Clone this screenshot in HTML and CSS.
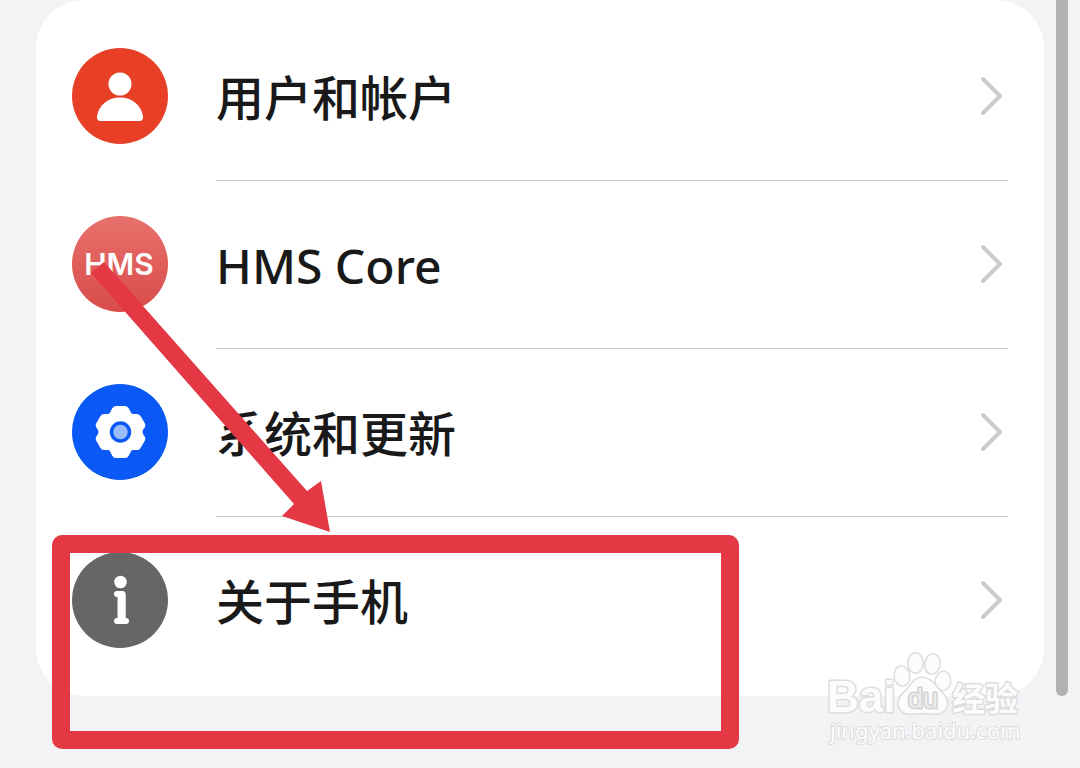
FILE: index.html
```
<!DOCTYPE html>
<html lang="zh-CN">
<head>
    <meta charset="UTF-8">
    <meta name="viewport" content="width=device-width, initial-scale=1.0">
    <title>设置</title>
    <link rel="stylesheet" href="styles.css">
</head>
<body>
    <main class="page">
        <nav class="settings-list">
            <a class="item" href="#account">
                <svg class="item-icon" viewBox="0 0 96 96" aria-hidden="true">
                    <circle cx="48" cy="48" r="48" fill="#e84026"/>
                    <circle cx="48" cy="36" r="11.500" fill="#fff"/>
                    <path d="M48 49.500C60 49.500 69 57 71 68C71.500 71 70 73 67 73H29C26 73 24.500 71 25 68C27 57 36 49.500 48 49.500Z" fill="#fff"/>
                </svg>
                <span class="item-body">
                    <span class="item-title">用户和帐户</span>
                    <svg class="chevron" viewBox="0 0 24 42" aria-hidden="true"><path d="M4 4L21 21L4 38"/></svg>
                </span>
            </a>
            <a class="item" href="#hms">
                <svg class="item-icon" viewBox="0 0 96 96" aria-hidden="true">
                    <defs>
                        <linearGradient id="hms-bg" x1="0" y1="0" x2="0" y2="1">
                            <stop offset="0" stop-color="#e8706b"/>
                            <stop offset="1" stop-color="#d84c4b"/>
                        </linearGradient>
                    </defs>
                    <circle cx="48" cy="48" r="48" fill="url(#hms-bg)"/>
                    <text class="hms-text" x="47" y="59" text-anchor="middle">HMS</text>
                </svg>
                <span class="item-body">
                    <span class="item-title">HMS Core</span>
                    <svg class="chevron" viewBox="0 0 24 42" aria-hidden="true"><path d="M4 4L21 21L4 38"/></svg>
                </span>
            </a>
            <a class="item" href="#system">
                <svg class="item-icon" viewBox="0 0 96 96" aria-hidden="true">
                    <circle cx="48" cy="48" r="48" fill="#0a59f7"/>
                    <path d="M44 23H53Q55 23 56 25L58 29Q59 31 61 31H65Q67 31 68 33L72 40Q73 42 71 44Q68 48 71 52Q73 54 72 56L68 63Q67 65 65 65H61Q59 65 58 67L56 71Q55 73 53 73H44Q42 73 41 71L39 67Q38 65 36 65H32Q30 65 29 63L25 56Q24 54 26 52Q29 48 26 44Q24 42 25 40L29 33Q30 31 32 31H36Q38 31 39 29L41 25Q42 23 44 23Z" fill="#fff" stroke="#fff" stroke-width="2" stroke-linejoin="round"/>
                    <circle cx="48.500" cy="48" r="9" fill="#9dbcfb" stroke="#0a59f7" stroke-width="3.500"/>
                </svg>
                <span class="item-body">
                    <span class="item-title">系统和更新</span>
                    <svg class="chevron" viewBox="0 0 24 42" aria-hidden="true"><path d="M4 4L21 21L4 38"/></svg>
                </span>
            </a>
            <a class="item" href="#about">
                <svg class="item-icon" viewBox="0 0 96 96" aria-hidden="true">
                    <circle cx="48" cy="48" r="48" fill="#666"/>
                    <circle cx="48.500" cy="30" r="6.300" fill="#fff"/>
                    <path d="M45 42H50.500V68M45 69H54" fill="none" stroke="#fff" stroke-width="6" stroke-linecap="round" stroke-linejoin="round"/>
                    <path d="M49.500 42V68" stroke="#fff" stroke-width="8"/>
                </svg>
                <span class="item-body">
                    <span class="item-title">关于手机</span>
                    <svg class="chevron" viewBox="0 0 24 42" aria-hidden="true"><path d="M4 4L21 21L4 38"/></svg>
                </span>
            </a>
        </nav>

        <div class="scrollbar"></div>

        <svg class="watermark" viewBox="0 0 204 100" role="img" aria-label="Baidu 经验">
            <text class="wm-bai" x="5" y="64">Bai</text>
            <g class="wm-paw">
                <ellipse cx="80" cy="28" rx="7" ry="9.500" transform="rotate(-8 80 28)"/>
                <ellipse cx="93.500" cy="15" rx="7" ry="9.500"/>
                <ellipse cx="110.500" cy="16" rx="7" ry="9.500" transform="rotate(10 110.500 16)"/>
                <ellipse cx="121" cy="33" rx="7" ry="9" transform="rotate(8 121 33)"/>
                <path d="M100 30C108 30 112 36 118 43C124 49 127 54 124 60C119 68 110 65 101 65C91 65 82 68 78 60C75 54 78 48 84 43C90 37 92 30 100 30Z"/>
            </g>
            <text class="wm-du" x="86" y="60">du</text>
            <text class="wm-cn" x="130" y="63">经验</text>
            <text class="wm-url" x="8" y="91">jingyan.baidu.com</text>
        </svg>

        <div class="highlight"></div>
        <svg class="arrow" viewBox="0 0 246 276" aria-hidden="true">
            <path d="M7 17L20 6L223 235L237 225L246 276L198 260L210 248Z" fill="#e43845"/>
        </svg>
    </main>
</body>
</html>
```

FILE: styles.css
```
* {
    box-sizing: border-box;
}

body {
    margin: 0;
    background: #f1f3f5;
    color: #191919;
    font-family: 'Noto Sans', 'Noto Sans CJK SC', sans-serif;
}

.page {
    position: relative;
    min-height: 100vh;
    padding: 0 36px;
}

.settings-list {
    padding: 12px 36px;
    background: #fff;
    border-radius: 48px;
}

.item {
    display: flex;
    align-items: center;
    gap: 48px;
    color: inherit;
    text-decoration: none;
}

.item-icon {
    flex: none;
    width: 96px;
    height: 96px;
}

.item-body {
    flex: 1;
    display: flex;
    align-items: center;
    justify-content: space-between;
    height: 168px;
    padding-right: 5px;
}

.item + .item .item-body {
    box-shadow: inset 0 1px #c8c8c8;
}

.item-title {
    padding-top: 4px;
    font-size: 48px;
    font-weight: 500;
    line-height: 72px;
}

.chevron {
    width: 24px;
    height: 42px;
    fill: none;
    stroke: #ccc;
    stroke-width: 4;
    stroke-linecap: round;
    stroke-linejoin: round;
}

.hms-text {
    fill: #fff;
    font-family: Inter, sans-serif;
    font-size: 30px;
    font-weight: 600;
}

.scrollbar {
    position: absolute;
    top: 0;
    right: 12px;
    width: 12px;
    height: 696px;
    background: #b0b1b3;
    border-radius: 0 0 6px 6px;
}

/* red marker round the last row */
.highlight {
    position: absolute;
    top: 535px;
    left: 52px;
    width: 687px;
    height: 214px;
    border: 18px solid #e43845;
    border-radius: 10px;
}

.arrow {
    position: absolute;
    top: 256px;
    left: 84px;
    width: 246px;
    height: 276px;
}

.watermark {
    position: absolute;
    top: 648px;
    right: 54px;
    width: 204px;
    height: 100px;
    fill: #fcfcfc;
    stroke: #dcddde;
    stroke-width: 3;
    stroke-linejoin: round;
    paint-order: stroke;
}

.wm-bai {
    font-family: 'Liberation Sans', sans-serif;
    font-size: 44px;
    font-weight: 700;
}

.wm-du {
    fill: #ececed;
    stroke: #d0d1d2;
    font-family: 'Liberation Sans', sans-serif;
    font-size: 27px;
}

.wm-cn {
    font-family: 'Noto Sans CJK SC', sans-serif;
    font-size: 33px;
    font-weight: 700;
}

.wm-url {
    font-size: 22px;
    stroke-width: 2;
}
```
